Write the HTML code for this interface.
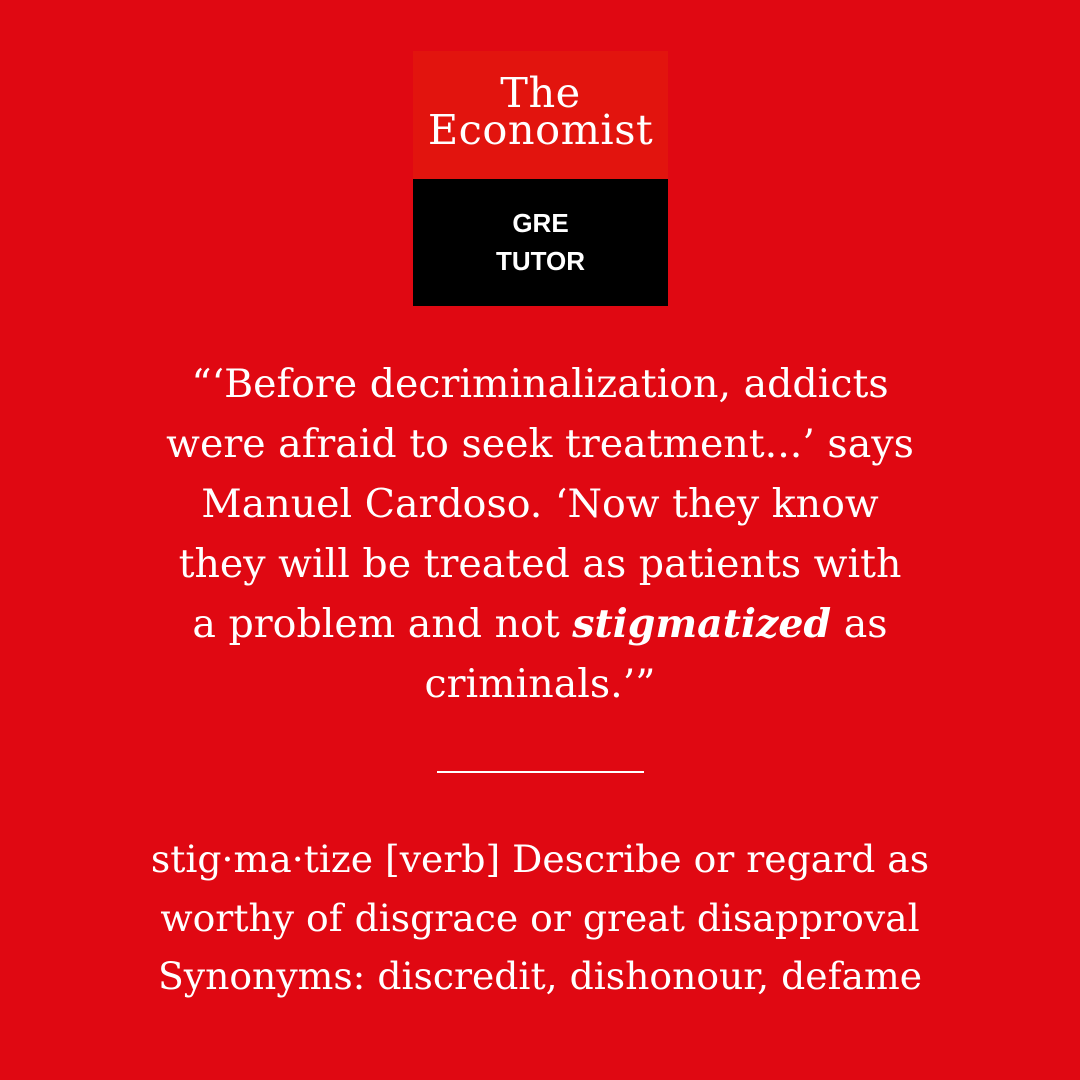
<!DOCTYPE html>
<html><head><style>
html,body{margin:0;padding:0}
body{width:1080px;height:1080px;background:#e00812;position:relative;overflow:hidden;font-family:"DejaVu Serif",serif;color:#fff}
.logo{position:absolute;left:413px;top:51px;width:255px;height:255px}
.top{height:128px;background:#e2140e;text-align:center;font-size:41.5px;line-height:37px;letter-spacing:0.5px}
.top div:first-child{padding-top:23px}
.bot{height:127px;background:#000;text-align:center;font-family:"Liberation Sans",sans-serif;font-weight:bold;font-size:26px;line-height:38px}
.bot div:first-child{padding-top:25px}
.q{position:absolute;left:0;width:1080px;top:354px;text-align:center;font-size:39.5px;line-height:60px}
.rule{position:absolute;left:437px;top:771px;width:207px;height:2px;background:#fff}
.d{position:absolute;left:0;width:1080px;top:830px;text-align:center;font-size:37.7px;line-height:58.5px}
</style></head><body>
<div class="logo">
<div class="top"><div>The</div><div>Economist</div></div>
<div class="bot"><div>GRE</div><div>TUTOR</div></div>
</div>
<div class="q">“‘Before decriminalization, addicts<br>were afraid to seek treatment...’ says<br>Manuel Cardoso. ‘Now they know<br>they will be treated as patients with<br>a problem and not <b><i>stigmatized</i></b> as<br>criminals.’”</div>
<div class="rule"></div>
<div class="d">stig·ma·tize [verb] Describe or regard as<br>worthy of disgrace or great disapproval<br>Synonyms: discredit, dishonour, defame</div>
</body></html>
